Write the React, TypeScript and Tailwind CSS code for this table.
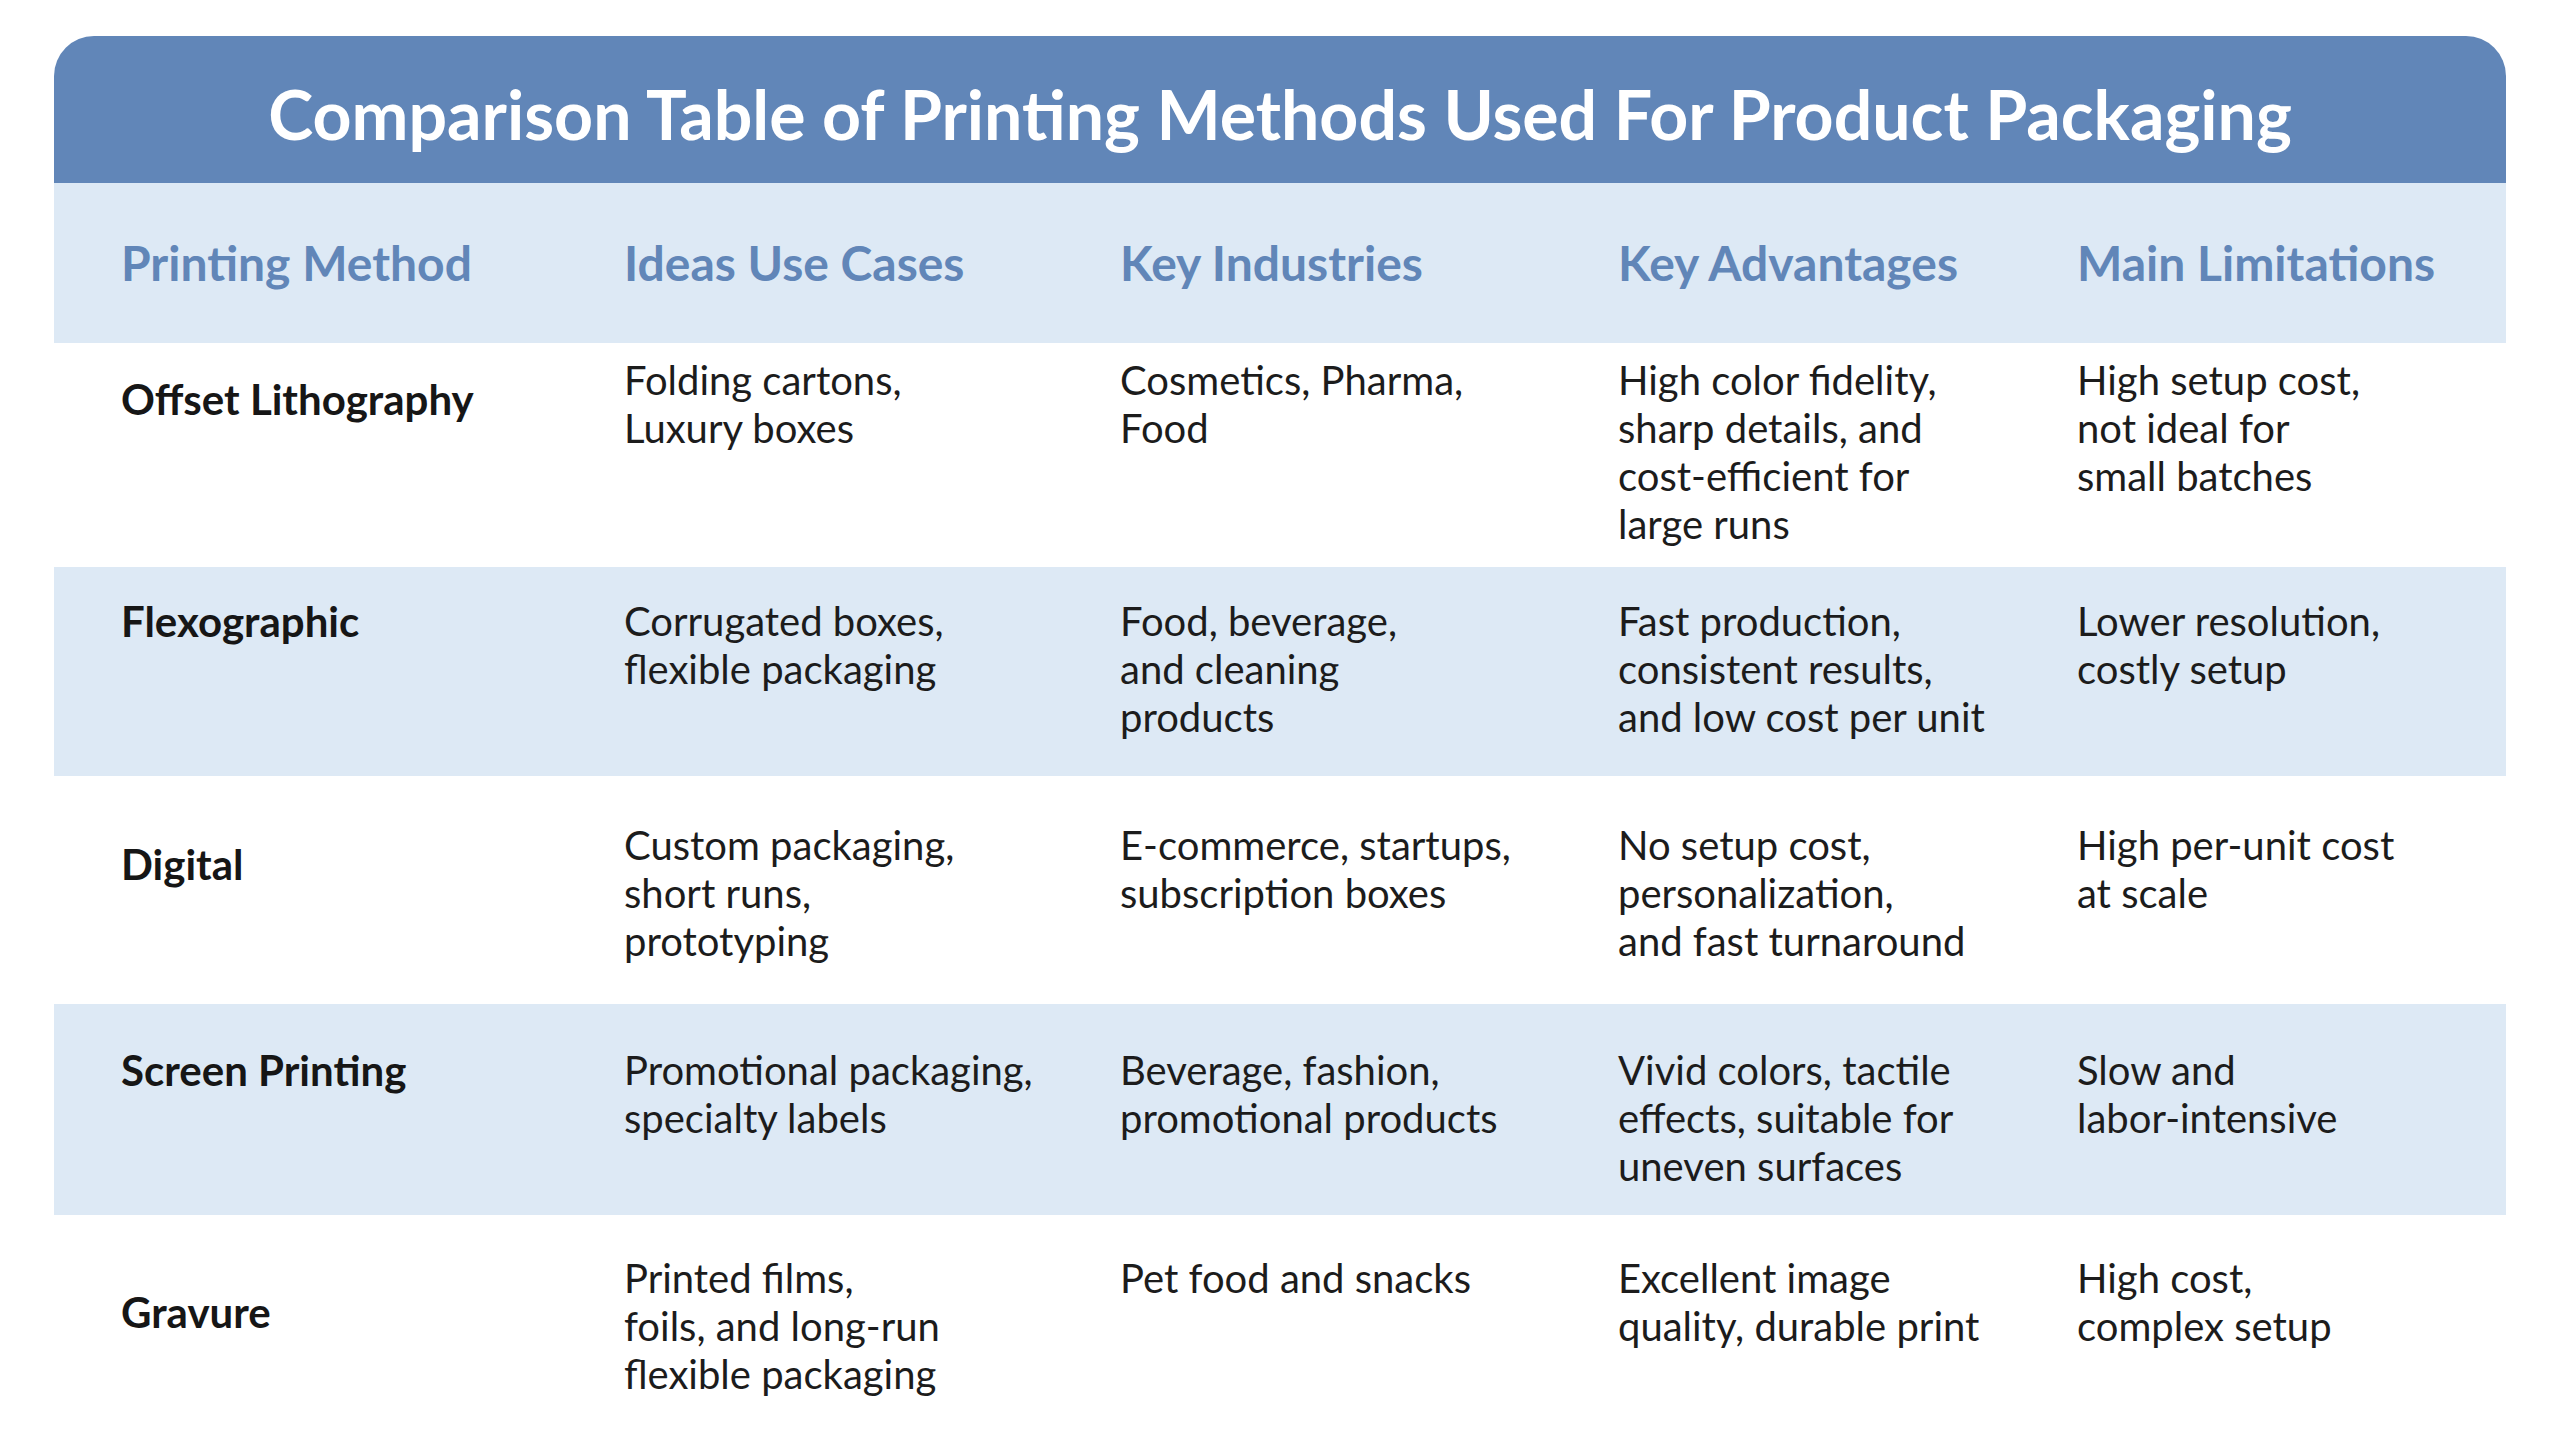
import React from 'react';

type Row = {
  method: string;
  cells: string[][];
  height: string;
  bg: string;
  bodyPad: string;
  methodPad: string;
};

const headers = ['Printing Method', 'Ideas Use Cases', 'Key Industries', 'Key Advantages', 'Main Limitations'];

const rows: Row[] = [
  {
    method: 'Offset Lithography',
    cells: [
      ['Folding cartons,', 'Luxury boxes'],
      ['Cosmetics, Pharma,', 'Food'],
      ['High color fidelity,', 'sharp details, and', 'cost-efficient for', 'large runs'],
      ['High setup cost,', 'not ideal for', 'small batches'],
    ],
    height: 'h-[224px]',
    bg: 'bg-white',
    bodyPad: 'pt-[13px]',
    methodPad: 'pt-[32px]',
  },
  {
    method: 'Flexographic',
    cells: [
      ['Corrugated boxes,', 'flexible packaging'],
      ['Food, beverage,', 'and cleaning', 'products'],
      ['Fast production,', 'consistent results,', 'and low cost per unit'],
      ['Lower resolution,', 'costly setup'],
    ],
    height: 'h-[209px]',
    bg: 'bg-[#dde9f5]',
    bodyPad: 'pt-[30px]',
    methodPad: 'pt-[30px]',
  },
  {
    method: 'Digital',
    cells: [
      ['Custom packaging,', 'short runs,', 'prototyping'],
      ['E-commerce, startups,', 'subscription boxes'],
      ['No setup cost,', 'personalization,', 'and fast turnaround'],
      ['High per-unit cost', 'at scale'],
    ],
    height: 'h-[228px]',
    bg: 'bg-white',
    bodyPad: 'pt-[45px]',
    methodPad: 'pt-[64px]',
  },
  {
    method: 'Screen Printing',
    cells: [
      ['Promotional packaging,', 'specialty labels'],
      ['Beverage, fashion,', 'promotional products'],
      ['Vivid colors, tactile', 'effects, suitable for', 'uneven surfaces'],
      ['Slow and', 'labor-intensive'],
    ],
    height: 'h-[211px]',
    bg: 'bg-[#dde9f5]',
    bodyPad: 'pt-[42px]',
    methodPad: 'pt-[42px]',
  },
  {
    method: 'Gravure',
    cells: [
      ['Printed films,', 'foils, and long-run', 'flexible packaging'],
      ['Pet food and snacks'],
      ['Excellent image', 'quality, durable print'],
      ['High cost,', 'complex setup'],
    ],
    height: 'h-[232px]',
    bg: 'bg-white',
    bodyPad: 'pt-[39px]',
    methodPad: 'pt-[73px]',
  },
];

const grid = 'grid grid-cols-[570px_496px_498px_459px_1fr]';

export default function App() {
  return (
    <div className="h-[1447px] overflow-hidden bg-white px-[54px] pt-[36px] font-['Lato',sans-serif]">
      <div className="w-full">
        <div className="flex h-[147px] items-center justify-center rounded-t-[40px] bg-[#6186b8]">
          <h1 className="mt-[8px] text-[68px] font-bold text-white">
            Comparison Table of Printing Methods Used For Product Packaging
          </h1>
        </div>

        <div className={`${grid} h-[160px] items-center bg-[#dde9f5]`}>
          {headers.map((h, i) => (
            <div
              key={h}
              className={`${i === 0 ? 'pl-[67px]' : ''} text-[48px] font-bold text-[#6186b8]`}
            >
              {h}
            </div>
          ))}
        </div>

        {rows.map((r) => (
          <div key={r.method} className={`${grid} ${r.height} ${r.bg} items-start`}>
            <div className={`${r.methodPad} pl-[67px] text-[42px] font-bold leading-[48px] text-[#161616]`}>
              {r.method}
            </div>
            {r.cells.map((lines, i) => (
              <div key={i} className={`${r.bodyPad} whitespace-nowrap text-[40px] leading-[48px] text-[#1c1c1c]`}>
                {lines.map((l) => (
                  <div key={l}>{l}</div>
                ))}
              </div>
            ))}
          </div>
        ))}
      </div>
    </div>
  );
}
